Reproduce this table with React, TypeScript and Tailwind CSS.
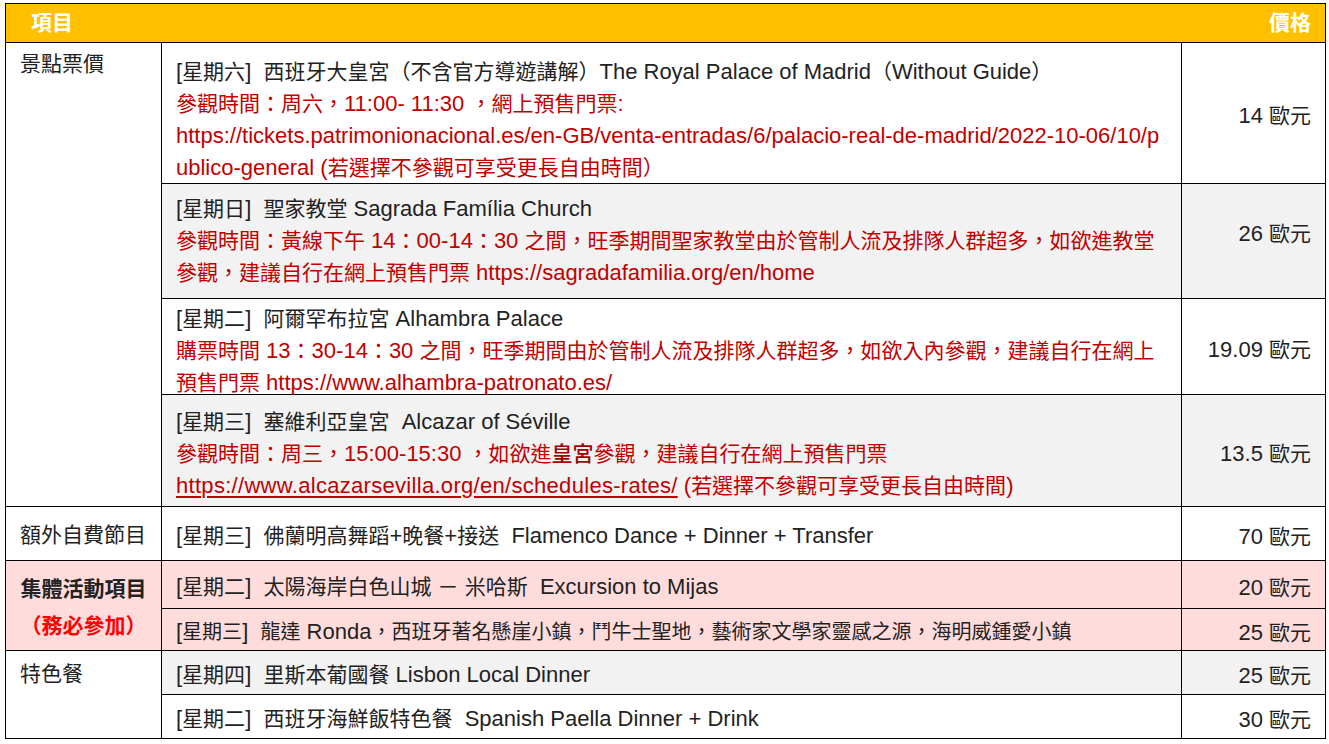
import React from 'react';

const red = 'text-[#c00000]';

// CJK glyphs in the source run a little smaller than the Latin ones
const T: React.FC<{ s: string; small?: boolean }> = ({ s, small }) => {
    const parts = s.split(/([\u3000-\u9fff\uff00-\uffef]+)/);
    return (
        <>
            {parts.map((p, i) =>
                i % 2 === 1 ? (
                    <span key={i} className={small ? 'text-[20px]' : 'text-[21px]'}>
                        {p}
                    </span>
                ) : (
                    p
                )
            )}
        </>
    );
};

const Cell: React.FC<{ className?: string; children?: React.ReactNode }> = ({ className = '', children }) => (
    <div className={`border-r border-b border-black ${className}`}>{children}</div>
);

const Detail: React.FC<{ lines: React.ReactNode[]; pad: string; bg: string }> = ({ lines, pad, bg }) => (
    <Cell className={`${bg} ${pad} pl-[14px]`}>
        {lines.map((l, i) => (
            <div key={i} className="leading-[32px] whitespace-pre">
                {l}
            </div>
        ))}
    </Cell>
);

const Price: React.FC<{ value: string; bg: string }> = ({ value, bg }) => (
    <Cell className={`${bg} flex items-center justify-end pr-[14px] pt-[5px]`}>
        <span className="whitespace-pre">
            <T s={`${value} 歐元`} />
        </span>
    </Cell>
);

const Single: React.FC<{ text: string; bg: string; small?: boolean }> = ({ text, bg, small }) => (
    <Cell className={`${bg} flex items-center pl-[14px] pt-[3px]`}>
        <span className="whitespace-pre">
            <T s={text} small={small} />
        </span>
    </Cell>
);

export default function App() {
    return (
        <div className="w-[1329px] h-[744px] bg-white pt-[3px] pl-[5px] font-['Liberation_Sans','Noto_Sans_CJK_TC',sans-serif] text-[22px] text-[#222]">
            <div className="grid grid-cols-[156px_1020px_144px] grid-rows-[39px_141px_115px_96px_112px_54px_48px_42px_44px_44px] border-l border-t border-black w-[1321px]">
                {/* header */}
                <div className="col-span-2 bg-[#ffc000] border-b border-black flex items-center pl-[25px] font-bold text-white">
                    <T s="項目" />
                </div>
                <Cell className="bg-[#ffc000] flex items-center justify-end pr-[14px] font-bold text-white">
                    <T s="價格" />
                </Cell>

                {/* 景點票價 */}
                <Cell className="row-span-4 pl-[14px] pt-[5px] leading-[32px]">
                    <T s="景點票價" />
                </Cell>
                <Detail
                    bg="bg-white"
                    pad="pt-[13px]"
                    lines={[
                        <T s="[星期六]  西班牙大皇宮（不含官方導遊講解）The Royal Palace of Madrid（Without Guide）" />,
                        <span className={red}>
                            <T s="參觀時間：周六，11:00- 11:30 ，網上預售門票:" />
                        </span>,
                        <span className={red}>
                            https://tickets.patrimonionacional.es/en-GB/venta-entradas/6/palacio-real-de-madrid/2022-10-06/10/p
                        </span>,
                        <span className={red}>
                            <T s="ublico-general (若選擇不參觀可享受更長自由時間）" />
                        </span>,
                    ]}
                />
                <Price value="14" bg="bg-white" />

                <Detail
                    bg="bg-[#f2f2f2]"
                    pad="pt-[9px]"
                    lines={[
                        <T s="[星期日]  聖家教堂 Sagrada Família Church" />,
                        <span className={red}>
                            <T s="參觀時間：黃線下午 14：00-14：30 之間，旺季期間聖家教堂由於管制人流及排隊人群超多，如欲進教堂" />
                        </span>,
                        <span className={red}>
                            <T s="參觀，建議自行在網上預售門票 https://sagradafamilia.org/en/home" />
                        </span>,
                    ]}
                />
                <Cell className="bg-[#f2f2f2] flex items-center justify-end pr-[14px] pb-[16px]">
                    <span className="whitespace-pre">
                        <T s="26 歐元" />
                    </span>
                </Cell>

                <Detail
                    bg="bg-white"
                    pad="pt-[4px]"
                    lines={[
                        <T s="[星期二]  阿爾罕布拉宮 Alhambra Palace" />,
                        <span className={red}>
                            <T s="購票時間 13：30-14：30 之間，旺季期間由於管制人流及排隊人群超多，如欲入內參觀，建議自行在網上" />
                        </span>,
                        <span className={red}>
                            <T s="預售門票 https://www.alhambra-patronato.es/" />
                        </span>,
                    ]}
                />
                <Price value="19.09" bg="bg-white" />

                <Detail
                    bg="bg-[#f2f2f2]"
                    pad="pt-[11px]"
                    lines={[
                        <T s="[星期三]  塞維利亞皇宮  Alcazar of Séville" />,
                        <span className={red}>
                            <T s="參觀時間：周三，15:00-15:30 ，如欲進" />
                            <span className="text-[#a00000] font-medium">
                                <T s="皇宮" />
                            </span>
                            <T s="參觀，建議自行在網上預售門票" />
                        </span>,
                        <span className={red}>
                            <span className="underline underline-offset-[3px] tracking-[0.3px]">
                                https://www.alcazarsevilla.org/en/schedules-rates/
                            </span>
                            <T s=" (若選擇不參觀可享受更長自由時間)" />
                        </span>,
                    ]}
                />
                <Price value="13.5" bg="bg-[#f2f2f2]" />

                {/* 額外自費節目 */}
                <Cell className="flex items-center pl-[14px] pt-[3px]">
                    <T s="額外自費節目" />
                </Cell>
                <Single bg="bg-white" text="[星期三]  佛蘭明高舞蹈+晚餐+接送  Flamenco Dance + Dinner + Transfer" />
                <Price value="70" bg="bg-white" />

                {/* 集體活動項目 */}
                <Cell className="row-span-2 bg-[#ffdcdc] flex flex-col justify-center items-center pt-[3px] leading-[37px] font-bold">
                    <T s="集體活動項目" />
                    <span className="text-[#ff0000]">
                        <T s="（務必參加）" />
                    </span>
                </Cell>
                <Single bg="bg-[#ffdcdc]" text="[星期二]  太陽海岸白色山城 － 米哈斯  Excursion to Mijas" />
                <Price value="20" bg="bg-[#ffdcdc]" />
                <Single
                    bg="bg-[#ffdcdc]"
                    small
                    text="[星期三]  龍達 Ronda，西班牙著名懸崖小鎮，鬥牛士聖地，藝術家文學家靈感之源，海明威鍾愛小鎮"
                />
                <Price value="25" bg="bg-[#ffdcdc]" />

                {/* 特色餐 */}
                <Cell className="row-span-2 pl-[14px] pt-[7px] leading-[32px]">
                    <T s="特色餐" />
                </Cell>
                <Single bg="bg-[#f2f2f2]" text="[星期四]  里斯本葡國餐 Lisbon Local Dinner" />
                <Price value="25" bg="bg-[#f2f2f2]" />
                <Single bg="bg-white" text="[星期二]  西班牙海鮮飯特色餐  Spanish Paella Dinner + Drink" />
                <Price value="30" bg="bg-white" />
            </div>
        </div>
    );
}
